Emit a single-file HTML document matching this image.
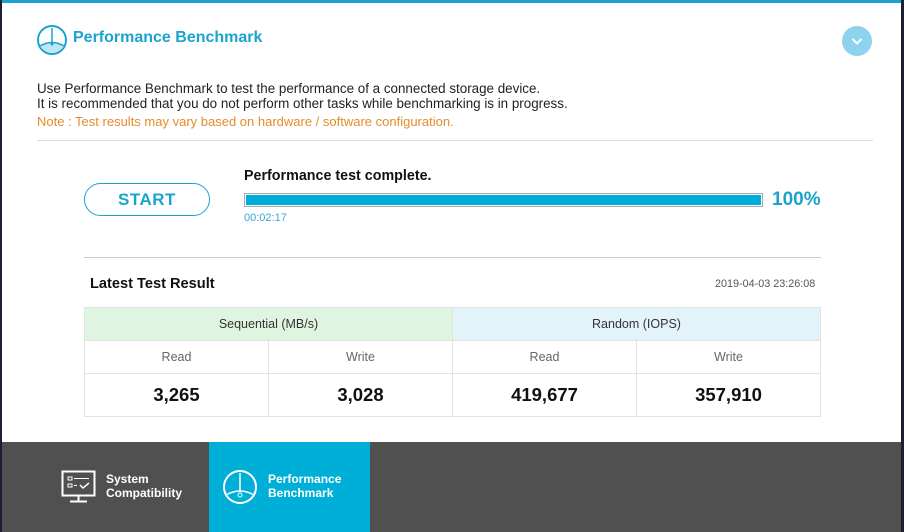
<!DOCTYPE html>
<html><head><style>
*{margin:0;padding:0;box-sizing:border-box}
body{width:904px;height:532px;overflow:hidden;background:#1a2030;font-family:"Liberation Sans",Arial,sans-serif;position:relative}
.main{position:absolute;left:2px;top:0;width:899px;height:442px;background:#fff;border-top:3px solid #1ba3cf}
.abs{position:absolute}
.title{left:71px;top:26px;font-size:16px;font-weight:bold;color:#1ba3cf}
.desc{left:35px;top:78px;font-size:13.4px;color:#222;line-height:15px}
.note{left:35px;top:111px;font-size:13px;color:#e58c2a}
.hr{height:1px;background:#ddd}
.start{left:82px;top:180px;width:126px;height:33px;border:1px solid #1ba3cf;border-radius:17px;color:#1ba3cf;font-weight:bold;font-size:17px;text-align:center;line-height:31px;letter-spacing:.5px}
.ptitle{left:242px;top:165px;font-size:14.3px;font-weight:bold;color:#111}
.bar{left:242px;top:190px;width:519px;height:14px;border:1px solid #aaa;padding:1px}
.bar div{width:100%;height:100%;background:#00acd9}
.time{left:242px;top:209px;font-size:11px;color:#3aa7d0}
.pct{left:770px;top:186px;font-size:19px;font-weight:bold;color:#1ba3cf}
table{position:absolute;left:84px;top:307px;width:737px;border-collapse:collapse;table-layout:fixed}
td{border:1px solid #e3e3e3;text-align:center;font-size:12.5px;color:#666}
td.n{font-size:18.5px;color:#111;font-weight:bold}
</style></head><body>
<div class="main">
<svg class="abs" style="left:33px;top:20px" width="34" height="34" viewBox="0 0 34 34"><circle cx="17" cy="17" r="14" fill="none" stroke="#1ba3cf" stroke-width="2"/><path d="M5 23 Q17 16 29 23 A14 14 0 0 1 5 23Z" fill="#bfe6f3"/><path d="M5 23 Q17 16 29 23" fill="none" stroke="#1ba3cf" stroke-width="1.5"/><line x1="17" y1="5" x2="17" y2="20" stroke="#1ba3cf" stroke-width="1.5"/><circle cx="17" cy="21" r="1.5" fill="#1ba3cf"/></svg>
<div class="abs title">Performance Benchmark</div>
<div class="abs" style="left:840px;top:23px;width:30px;height:30px;border-radius:50%;background:#8dd3ef"><svg width="30" height="30"><path d="M10.5 13 L15 17.5 L19.5 13" fill="none" stroke="#fff" stroke-width="2"/></svg></div>
<div class="abs desc">Use Performance Benchmark to test the performance of a connected storage device.<br>It is recommended that you do not perform other tasks while benchmarking is in progress.</div>
<div class="abs note">Note : Test results may vary based on hardware / software configuration.</div>
<div class="abs hr" style="left:35px;top:137px;width:836px"></div>
<div class="abs start">START</div>
<div class="abs ptitle">Performance test complete.</div>
<div class="abs bar"><div></div></div>
<div class="abs time">00:02:17</div>
<div class="abs pct">100%</div>
<div class="abs hr" style="left:82px;top:254px;width:737px;background:#ccc"></div>
<div class="abs" style="left:88px;top:273px;font-size:14.6px;font-weight:bold;color:#111">Latest Test Result</div>
<div class="abs" style="left:713px;top:275px;font-size:10.8px;color:#555">2019-04-03 23:26:08</div>
</div>
<table>
<tr style="height:33px"><td colspan="2" style="background:#e0f4e2;color:#333">Sequential (MB/s)</td><td colspan="2" style="background:#e2f3fa;color:#333">Random (IOPS)</td></tr>
<tr style="height:33px"><td>Read</td><td>Write</td><td>Read</td><td>Write</td></tr>
<tr style="height:43px"><td class="n">3,265</td><td class="n">3,028</td><td class="n">419,677</td><td class="n">357,910</td></tr>
</table>
<div class="abs" style="left:2px;top:442px;width:899px;height:90px;background:#505050"></div>
<div class="abs" style="left:209px;top:442px;width:161px;height:90px;background:#00afd8"></div>
<svg class="abs" style="left:61px;top:470px" width="36" height="34" viewBox="0 0 36 34"><rect x="1.5" y="1.5" width="32" height="24" fill="none" stroke="#fff" stroke-width="2"/><rect x="7" y="7" width="4" height="3" fill="none" stroke="#fff"/><rect x="7" y="14" width="4" height="3" fill="none" stroke="#fff"/><line x1="13" y1="8.5" x2="28" y2="8.5" stroke="#fff"/><line x1="13" y1="15.5" x2="16" y2="15.5" stroke="#fff"/><path d="M19 15 L22 18 L28 13" fill="none" stroke="#fff" stroke-width="1.5"/><line x1="17.5" y1="26" x2="17.5" y2="31" stroke="#fff" stroke-width="2"/><line x1="9" y1="31.5" x2="26" y2="31.5" stroke="#fff" stroke-width="2"/></svg>
<div class="abs" style="left:106px;top:472px;font-size:12px;font-weight:bold;color:#fff;line-height:14px">System<br>Compatibility</div>
<svg class="abs" style="left:222px;top:469px" width="36" height="36" viewBox="0 0 36 36"><circle cx="18" cy="18" r="16" fill="none" stroke="#fff" stroke-width="2"/><path d="M4 26 Q18 18 32 26" fill="none" stroke="#fff" stroke-width="1.5"/><line x1="18" y1="4" x2="18" y2="22" stroke="#fff" stroke-width="1.5"/><circle cx="18" cy="26" r="2" fill="none" stroke="#fff"/></svg>
<div class="abs" style="left:268px;top:472px;font-size:12px;font-weight:bold;color:#fff;line-height:14px">Performance<br>Benchmark</div>
</body></html>
